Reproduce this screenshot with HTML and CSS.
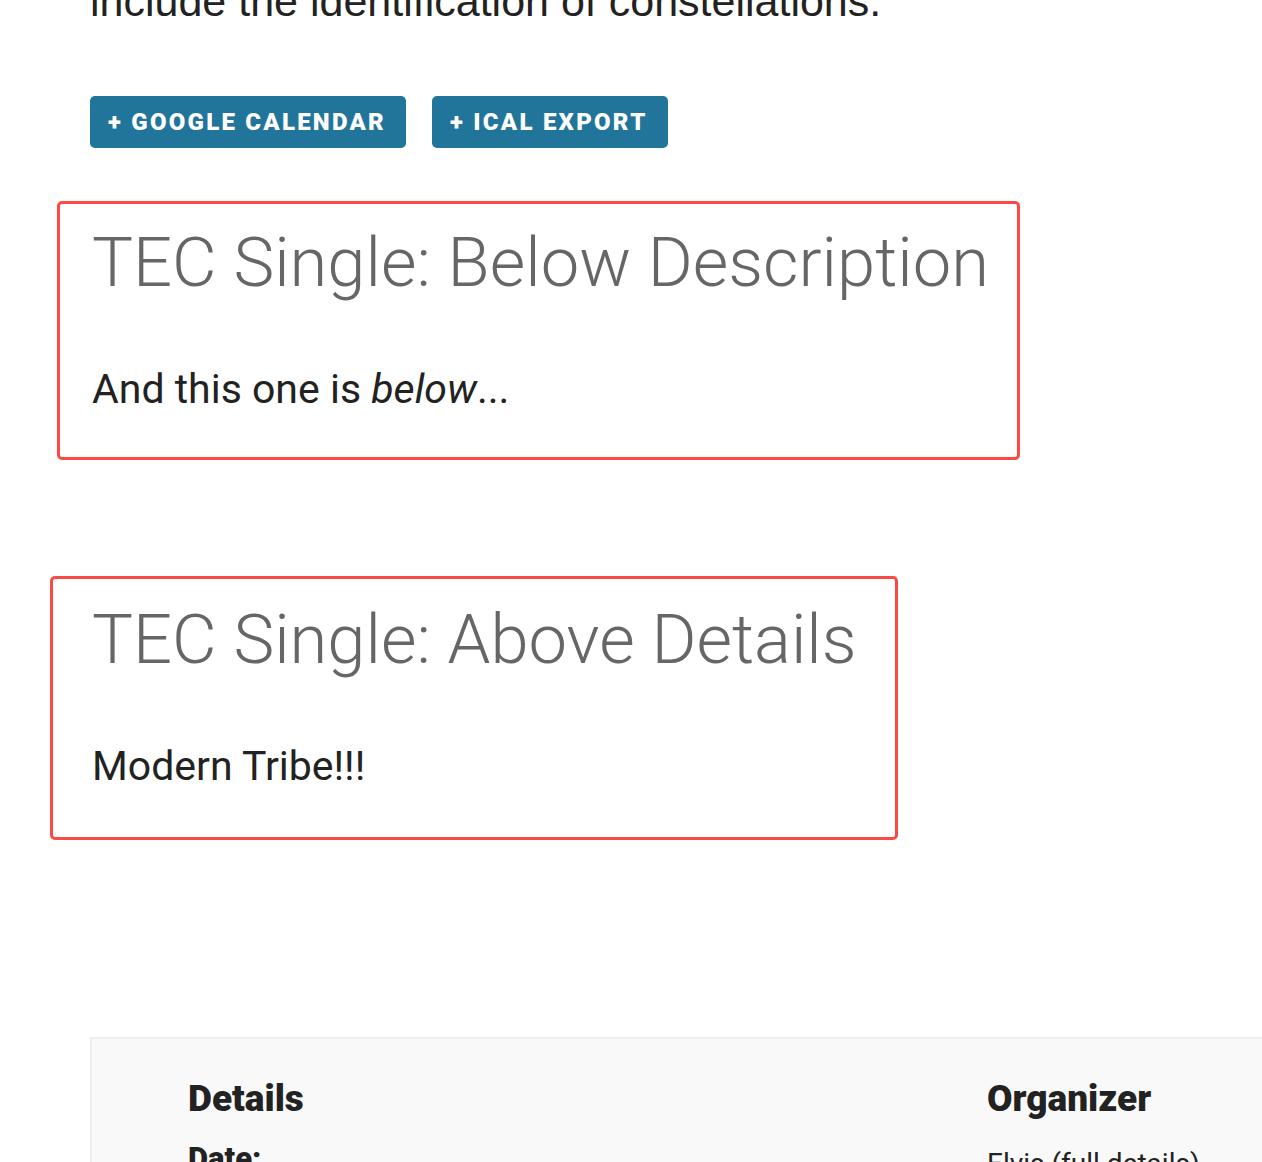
FILE: index.html
```html
<!DOCTYPE html>
<html>
<head>
<meta charset="utf-8">
<link rel="stylesheet" href="styles.css">
</head>
<body>
<main class="page">
  <p class="intro">include the identification of constellations.</p>
  <div class="actions">
    <a class="btn">+ Google Calendar</a>
    <a class="btn">+ iCal Export</a>
  </div>
  <section class="widget widget-below">
    <h2 class="widget-title">TEC Single: Below Description</h2>
    <p class="widget-text">And this one is <em>below</em>...</p>
  </section>
  <section class="widget widget-above">
    <h2 class="widget-title">TEC Single: Above Details</h2>
    <p class="widget-text">Modern Tribe!!!</p>
  </section>
  <section class="meta">
    <div class="meta-col meta-details">
      <h3 class="meta-title">Details</h3>
      <div class="meta-label">Date:</div>
    </div>
    <div class="meta-col meta-organizer">
      <h3 class="meta-title">Organizer</h3>
      <div class="meta-value">Elvis (full details)</div>
    </div>
  </section>
</main>
</body>
</html>
```

FILE: styles.css
```css
html, body {
  margin: 0;
  padding: 0;
  background: #fff;
}
body {
  overflow: hidden;
  height: 1162px;
}
.page {
  padding-left: 90px;
}
.intro {
  margin: -22px 0 0 0;
  font-family: "Liberation Sans", Arial, sans-serif;
  font-size: 43px;
  line-height: 46px;
  color: #222;
  white-space: nowrap;
}
.actions {
  display: flex;
  gap: 26px;
  margin-top: 72px;
}
.btn {
  display: inline-flex;
  align-items: center;
  height: 52px;
  padding: 0 20px 0 18px;
  background: #21759b;
  color: #fff;
  border-radius: 5px;
  font-family: "Roboto", "Liberation Sans", sans-serif;
  font-weight: 900;
  font-size: 24px;
  letter-spacing: 2.25px;
  text-transform: uppercase;
}
.widget {
  border: 3px solid #fa4a44;
  border-radius: 5px;
  box-sizing: border-box;
}
.widget-below {
  margin: 53px 0 0 -33px;
  width: 963px;
  height: 259px;
  padding: 14px 0 0 32px;
}
.widget-above {
  margin: 116px 0 0 -40px;
  width: 848px;
  height: 264px;
  padding: 16px 0 0 39px;
}
.widget-title {
  margin: 0;
  font-family: "Roboto", "Liberation Sans", sans-serif;
  font-weight: 300;
  font-size: 68.7px;
  line-height: 90px;
  color: #666;
  white-space: nowrap;
}
.widget-text {
  margin: 53px 0 0 0;
  font-family: "Roboto", "Liberation Sans", sans-serif;
  font-weight: 400;
  font-size: 41px;
  line-height: 56px;
  color: #222;
}
.meta {
  margin-top: 197px;
  border: 2px solid #eee;
  border-right: none;
  background: #f9f9f9;
  display: flex;
  padding: 38px 0 0 96px;
  height: 200px;
}
.meta-col {
  font-family: "Roboto", "Liberation Sans", sans-serif;
}
.meta-details {
  width: 799px;
}
.meta-title {
  margin: 0;
  font-weight: 900;
  font-size: 37px;
  line-height: 44px;
  color: #222;
}
.meta-label {
  margin-top: 19px;
  font-weight: 900;
  font-size: 31px;
  color: #222;
}
.meta-value {
  margin-top: 26px;
  font-size: 28px;
  color: #222;
}
```
